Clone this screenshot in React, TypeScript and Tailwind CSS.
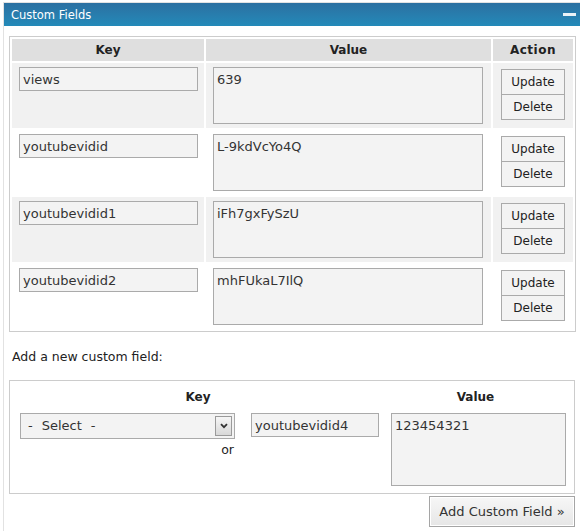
import React from 'react';

const FIELDS = [
  { key: 'views', value: '639' },
  { key: 'youtubevidid', value: 'L-9kdVcYo4Q' },
  { key: 'youtubevidid1', value: 'iFh7gxFySzU' },
  { key: 'youtubevidid2', value: 'mhFUkaL7IlQ' },
];

const inputCls =
  'border border-[#aaaaaa] bg-[#f3f3f3] text-[13px] text-[#333] outline-none';

const FieldRow: React.FC<{ field: { key: string; value: string }; shaded: boolean }> = ({ field, shaded }) => {
  const bg = shaded ? 'bg-[#f1f1f1]' : 'bg-white';
  return (
    <>
      <div className={`${bg} h-[65px] pt-[4px] pl-[7px]`}>
        <input type="text" defaultValue={field.key} className={`${inputCls} block w-[179px] h-[24px] px-[3px]`} />
      </div>
      <div className={`${bg} h-[65px] pt-[4px] pl-[7px]`}>
        <textarea
          defaultValue={field.value}
          className={`${inputCls} block w-[270px] h-[57px] px-[3px] pt-[4px] leading-[16px] resize-none`}
        />
      </div>
      <div className={`${bg} h-[65px] pt-[6px] pl-[8px]`}>
        <button className="block w-[64px] h-[26px] border border-[#aaaaaa] bg-[#f3f3f3] text-[12px] text-[#222]">Update</button>
        <button className="block w-[64px] h-[26px] -mt-px border border-[#aaaaaa] bg-[#f3f3f3] text-[12px] text-[#222]">Delete</button>
      </div>
    </>
  );
};

export default function App() {
  return (
    <div className="w-[580px] h-[531px] overflow-hidden bg-white pt-[2px] pl-[3px]" style={{ fontFamily: '"DejaVu Sans", Verdana, sans-serif' }}>
      <div className="h-full border-l border-t border-[#e2e2e2]">
        {/* Title bar */}
        <div className="h-[23px] flex items-center justify-between pl-[7px] pr-[4px] bg-gradient-to-b from-[#2b70a1] to-[#238ab9]">
          <span className="text-[11.5px] text-white mt-[2px]">Custom Fields</span>
          <span className="block w-[13px] h-[3px] bg-white/90 -mt-[1px]" />
        </div>

        <div className="pl-[5px] pt-[10px]">
          {/* Existing fields */}
          <div className="w-[567px] border border-[#cccccc] p-[2px] grid grid-cols-[192px_285px_80px] gap-[2px]">
            <div className="h-[22px] bg-[#dfdfdf] flex items-center justify-center text-[12px] font-bold text-[#222]">Key</div>
            <div className="h-[22px] bg-[#dfdfdf] flex items-center justify-center text-[12px] font-bold text-[#222]">Value</div>
            <div className="h-[22px] bg-[#dfdfdf] flex items-center justify-center text-[12px] font-bold text-[#222] tracking-[0.5px]">Action</div>
            {FIELDS.map((f, i) => (
              <FieldRow key={f.key} field={f} shaded={i % 2 === 0} />
            ))}
          </div>

          <p className="mt-[17px] pl-[3px] text-[12.5px] leading-[16px] text-[#222]">Add a new custom field:</p>

          {/* New field */}
          <div className="mt-[15px] w-[566px] h-[114px] border border-[#cccccc] pt-[8px] pl-[10px]">
            <div className="flex text-[12px] font-bold text-[#222] leading-[16px]">
              <div className="w-[356px] text-center">Key</div>
              <div className="w-[12px]" />
              <div className="w-[175px] text-center">Value</div>
            </div>
            <div className="mt-[8px] flex items-start">
              <div className="w-[215px]">
                <div className="relative h-[26px] border border-[#aaaaaa] bg-[#f3f3f3] flex items-center pl-[7px] text-[13px] text-[#333]">
                  <span>-</span>
                  <span className="ml-[9px]">Select</span>
                  <span className="ml-[9px]">-</span>
                  <span className="absolute right-[2px] top-[2px] w-[17px] h-[20px] border border-[#9a9a9a] bg-gradient-to-b from-[#f6f6f6] to-[#d8d8d8] flex items-center justify-center">
                    <svg width="8" height="6" viewBox="0 0 8 6">
                      <path d="M1 1.2 L4 4.2 L7 1.2" fill="none" stroke="#333" strokeWidth="1.8" />
                    </svg>
                  </span>
                </div>
                <div className="mt-[3px] text-right text-[12.5px] leading-[16px] text-[#222] pr-[1px]">or</div>
              </div>
              <input type="text" defaultValue="youtubevidid4" className={`${inputCls} ml-[16px] block w-[128px] h-[24px] px-[3px]`} />
              <textarea
                defaultValue="123454321"
                className={`${inputCls} ml-[12px] block w-[175px] h-[73px] px-[3px] pt-[4px] leading-[16px] resize-none`}
              />
            </div>
          </div>

          <div className="w-[566px] flex justify-end mt-[2px]">
            <button className="w-[146px] h-[31px] border border-[#a5a5a5] bg-gradient-to-b from-[#f7f7f7] to-[#e6e6e6] shadow-[inset_0_0_0_1px_#ffffff] text-[13px] text-[#333]">
              Add Custom Field »
            </button>
          </div>
        </div>
      </div>
    </div>
  );
}
